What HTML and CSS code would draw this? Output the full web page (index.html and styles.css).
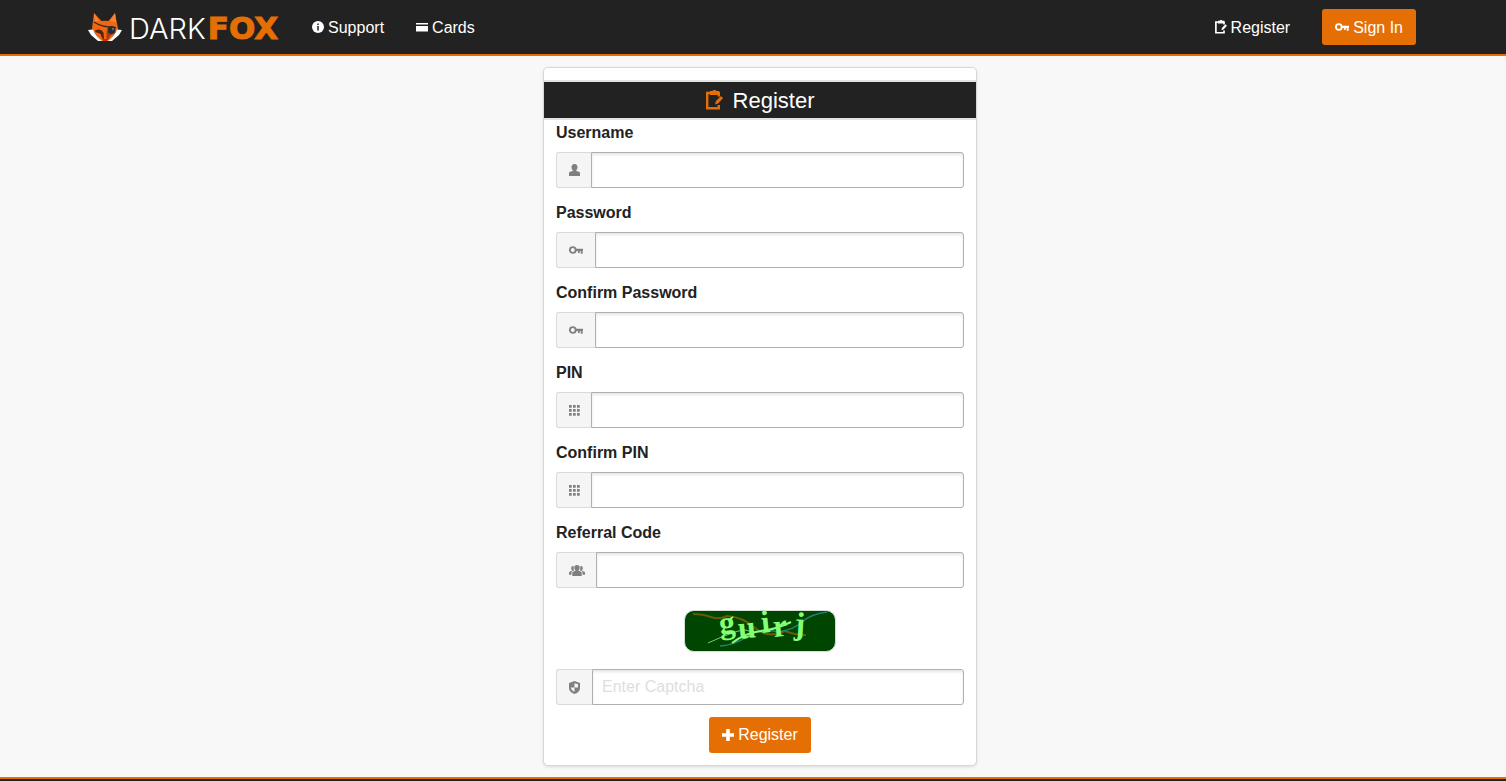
FILE: index.html
```html
<!DOCTYPE html>
<html lang="en">
<head>
<meta charset="utf-8">
<title>Register</title>
<link rel="stylesheet" href="styles.css">
</head>
<body>
<svg class="sprite" aria-hidden="true">
  <symbol id="i-info" viewBox="0 0 12 12"><circle cx="6" cy="6" r="6" fill="currentColor"/><path d="M5 2.500h2v1.500H5zM5 5h2v4.500H5z" fill="#555"/></symbol>
  <symbol id="i-card" viewBox="0 0 12 12"><path d="M0 2h12v1.500H0zM0 5h12V10.500H0z" fill="currentColor"/></symbol>
  <symbol id="i-edit" viewBox="0 0 17 20"><path d="M4 1h2.500q.5-1 1.500-1h1q1 0 1.500 1H13v4H4z" fill="currentColor"/><path d="M4 3H1.200v15.200h11.600V15M12.800 6.500V3H11" fill="none" stroke="currentColor" stroke-width="2.400"/><path d="M9 14.500l1-3.500 5-5 2 2.200-5 5.300z" fill="currentColor"/></symbol>
  <symbol id="i-key" viewBox="0 0 14 8" preserveAspectRatio="xMinYMid meet"><circle cx="3.800" cy="4" r="2.900" fill="none" stroke="currentColor" stroke-width="1.900"/><path d="M6.500 2.800H14v2h-.4v3h-1.900V5h-.9v2H8.900V5H6.500z" fill="currentColor"/></symbol>
  <symbol id="i-user" viewBox="0 0 11 12"><path d="M5.500 0C7.500 0 8.500 1.300 8.500 3.200c0 1.400-.6 2.400-1.300 3.100v.7l2.800.8q1 .4 1 1.500V12H0V9.300Q0 8.200 1 7.800L3.800 7v-.7C3.100 5.600 2.500 4.600 2.500 3.200 2.500 1.300 3.500 0 5.500 0z" fill="currentColor"/></symbol>
  <symbol id="i-grid" viewBox="0 0 11 11"><path d="M0 0h2.700v2.700H0zM4 0h2.700v2.700H4zM8 0h2.700v2.700H8zM0 4h2.700v2.700H0zM4 4h2.700v2.700H4zM8 4h2.700v2.700H8zM0 8h2.700v2.700H0zM4 8h2.700v2.700H4zM8 8h2.700v2.700H8z" fill="currentColor"/></symbol>
  <symbol id="i-group" viewBox="0 0 16 11"><path d="M8 0c1.700 0 2.700 1 2.700 2.700 0 1.200-.5 2-1.100 2.600v.4l2.100.7q1 .4 1 1.500V11H3.300V7.900q0-1.100 1-1.500l2.100-.7v-.4c-.6-.6-1.100-1.400-1.100-2.600C5.300 1 6.300 0 8 0zM4.800 1.200C3 .8 2.200 1.800 2.200 3.200c0 1 .3 1.500.8 2v.5L1 6.400Q0 6.700 0 7.700V9.800h2.500V8c0-1.200.6-1.800 1.500-2.200l1-.4Q4.300 3.500 4.800 1.200zM11.200 1.200c1.800-.4 2.600.6 2.600 2 0 1-.3 1.500-.8 2v.5l2 .7q1 .3 1 1.300v2.100h-2.500V8c0-1.200-.6-1.800-1.500-2.200l-1-.4q.7-1.900.2-4.200z" fill="currentColor"/></symbol>
  <symbol id="i-shield" viewBox="0 0 12 13" preserveAspectRatio="xMinYMid meet"><path d="M5.500 0L11 2v5q0 4-5.500 6Q0 11 0 7V2z" fill="currentColor"/><path d="M5.500 6.500v4.200Q2.200 9.500 2 6.500zM5.500 2.200L9 3.300v3.200H5.500z" fill="#f5f5f5"/></symbol>
  <symbol id="i-plus" viewBox="0 0 12 12"><path d="M4.200 0h3.600v4.200H12v3.600H7.800V12H4.200V7.800H0V4.200h4.200z" fill="currentColor"/></symbol>
</svg>

<header class="topbar">
  <nav class="nav">
    <a class="brand" href="#">
      <svg class="fox" viewBox="0 0 34 28" aria-hidden="true">
        <path d="M6 0l7.500 8q3.500-.6 7 0L27 0l3 15.500-8 12.500H12L4 15.500z" fill="#ef6712"/>
        <path d="M6 0l5 8-4 1zM27 0l-5 8 6 1.500z" fill="#f98232"/>
        <path d="M0 17l5-.5q2.500 6.500 9 11.500h-4L3 22zM34 17l-5-.5Q26.500 23 20 28h4l7-6z" fill="#fff"/>
        <path d="M7 17.500q6-2.500 8.500 2l.5 7-2-1.500-1.500-4-5-2z" fill="#5c2210"/>
        <path d="M18.500 18l2 1 5 2-3.500 2-2 4h-1.500z" fill="#a63c10"/>
        <path d="M6 9q8 5.500 22 5.500" fill="none" stroke="#35201a" stroke-width="1.100"/>
        <circle cx="23.500" cy="17" r="4" fill="#292c30"/><circle cx="25" cy="16" r="1.200" fill="#65686c"/>
        <path d="M14 26h6l-1.500 2h-3z" fill="#d52412"/>
      </svg>
      <span class="word"><span class="dark">DARK</span><span class="bold">FOX</span></span>
    </a>
    <a class="link" href="#"><svg class="ic12"><use href="#i-info"/></svg><span class="txt">Support</span></a>
    <a class="link" href="#"><svg class="ic12"><use href="#i-card"/></svg><span class="txt">Cards</span></a>
    <a class="link end" href="#"><svg class="ic-edit"><use href="#i-edit"/></svg><span class="txt">Register</span></a>
    <a class="btn" href="#"><svg class="ic-key"><use href="#i-key"/></svg><span class="txt">Sign In</span></a>
  </nav>
</header>

<main class="main">
  <form class="card">
    <h1 class="title"><svg class="ic-title"><use href="#i-edit"/></svg><span class="txt">Register</span></h1>
    <div class="fields">
      <div class="field"><label for="username">Username</label>
        <div class="group"><span class="addon"><svg class="ic-user"><use href="#i-user"/></svg></span><input id="username" type="text"></div></div>
      <div class="field"><label for="password">Password</label>
        <div class="group"><span class="addon"><svg class="ic-pass"><use href="#i-key"/></svg></span><input id="password" type="password"></div></div>
      <div class="field"><label for="password2">Confirm Password</label>
        <div class="group"><span class="addon"><svg class="ic-pass"><use href="#i-key"/></svg></span><input id="password2" type="password"></div></div>
      <div class="field"><label for="pin">PIN</label>
        <div class="group"><span class="addon"><svg class="ic-grid"><use href="#i-grid"/></svg></span><input id="pin" type="password"></div></div>
      <div class="field"><label for="pin2">Confirm PIN</label>
        <div class="group"><span class="addon"><svg class="ic-grid"><use href="#i-grid"/></svg></span><input id="pin2" type="password"></div></div>
      <div class="field"><label for="referral">Referral Code</label>
        <div class="group"><span class="addon"><svg class="ic-group"><use href="#i-group"/></svg></span><input id="referral" type="text"></div></div>
      <svg class="captcha" viewBox="0 0 150 40" role="img" aria-label="Captcha">
        <path d="M8 3q10 0 18 3t16-1q16 1 28 12t30 3q10 4 21 4" fill="none" stroke="#6a5a05" stroke-width="2"/>
        <path d="M35 35q15-1 28-10t30-4q15-2 24-10T142 1" fill="none" stroke="#238277" stroke-width="1.500"/>
        <path d="M23 32q15-7 27-11t15 0" fill="none" stroke="#65d660" stroke-width="1"/>
        <path d="M47 32q13-10 29-12t30-9" fill="none" stroke="#84ff76" stroke-width="2"/>
        <g class="glyphs">
          <text x="35" y="23" transform="rotate(-6 35 23)">g</text>
          <text x="54" y="28" transform="rotate(-6 54 28)">u</text>
          <text x="77" y="22" transform="rotate(-6 77 22)">i</text>
          <text x="89" y="26" transform="rotate(-6 89 26)">r</text>
          <text x="109" y="23" transform="rotate(3 109 23)">j</text>
        </g>
      </svg>
      <div class="group"><span class="addon"><svg class="ic-shield"><use href="#i-shield"/></svg></span><input type="text" placeholder="Enter Captcha" aria-label="Enter Captcha"></div>
      <button class="btn submit" type="submit"><svg class="ic12"><use href="#i-plus"/></svg>Register</button>
    </div>
  </form>
</main>
<footer class="footer"></footer>
</body>
</html>
```
FILE: styles.css
```css
* { box-sizing: border-box; }
html { height: 100%; overflow: hidden; }
body {
  margin: 0;
  min-height: 100%;
  display: flex;
  flex-direction: column;
  background: #f8f8f8;
  color: #222;
  font: 16px/24px "Liberation Sans", Arial, sans-serif;
}
svg { display: block; flex: none; }
.sprite { display: none; }

.topbar {
  padding: 9px 90px 9px 88px;
  background: #222;
  border-bottom: 2px solid #e66f05;
}
.nav { display: flex; align-items: center; }
.nav a { color: #fff; text-decoration: none; }
.txt { padding-top: 2px; }
.brand { display: flex; align-items: center; gap: 7px; margin-right: 34px; height: 36px; }
.fox { width: 34px; height: 28px; }
.word { display: flex; align-items: baseline; gap: 2px; padding-top: 2px; font: 300 29px/36px Inter, sans-serif; }
.bold {
  color: #e66f05;
  font-family: "DejaVu Sans", sans-serif;
  font-size: 31px;
  font-weight: 700;
  -webkit-text-stroke: 1px #e66f05;
}
.link { display: flex; align-items: center; gap: 4px; margin-right: 32px; }
.link.end { margin-left: auto; }
.btn {
  display: flex;
  align-items: center;
  gap: 4px;
  height: 36px;
  padding: 0 13px;
  border: 0;
  border-radius: 3px;
  background: #e66f05;
  color: #fff;
  font: inherit;
}
.ic12 { width: 12px; height: 12px; }
.ic-edit { width: 12px; height: 14px; }
.ic-key { width: 14px; height: 8px; }

.main { flex: 1; padding: 11px 0 11px 14px; }
.card {
  width: 434px;
  margin: 0 auto;
  padding: 12px 0;
  background: #fff;
  border: 1px solid #d8d8d8;
  border-radius: 5px;
  box-shadow: 0 1px 3px rgba(0, 0, 0, .12);
}
.title {
  display: flex;
  align-items: center;
  justify-content: center;
  gap: 10px;
  margin: 0;
  border: solid #e2e2e2;
  border-width: 2px 0;
  background: #222;
  color: #fff;
  font-size: 22px;
  font-weight: 400;
  line-height: 34px;
}
.ic-title { width: 17px; height: 20px; color: #e66f05; }
.fields { padding: 0 12px; }
.field { margin-bottom: 12px; }
.field label { display: block; margin-bottom: 6px; font-weight: 700; line-height: 26px; }
.group { display: flex; height: 36px; }
.addon {
  display: flex;
  align-items: center;
  padding: 0 11px 0 12px;
  border: 1px solid #dadada;
  border-right: 0;
  border-radius: 3px 0 0 3px;
  background: #f5f5f5;
  color: #808080;
}
.ic-user { width: 11px; height: 12px; }
.ic-pass { width: 15px; height: 8px; }
.ic-grid { width: 11px; height: 11px; }
.ic-group { width: 16px; height: 11px; }
.ic-shield { width: 12px; height: 13px; }
.group input {
  flex: 1;
  min-width: 0;
  padding: 0 9px;
  border: 1px solid #b0b0b0;
  border-radius: 0 3px 3px 0;
  background: #fff;
  box-shadow: inset 0 2px 3px rgba(0, 0, 0, .1);
  color: #222;
  font: inherit;
  outline: 0;
}
.group input::placeholder { color: #dedede; opacity: 1; }
.captcha {
  width: 152px;
  height: 42px;
  margin: 22px auto 17px;
  border: 1px solid #d5ddd5;
  border-radius: 10px;
  background: #004500;
  overflow: visible;
}
.glyphs { fill: #84ff76; font: 700 32px "Liberation Serif", serif; }
.submit { margin: 12px auto 0; }

.footer { height: 4px; background: #222; border-top: 2px solid #e66f05; }
```
